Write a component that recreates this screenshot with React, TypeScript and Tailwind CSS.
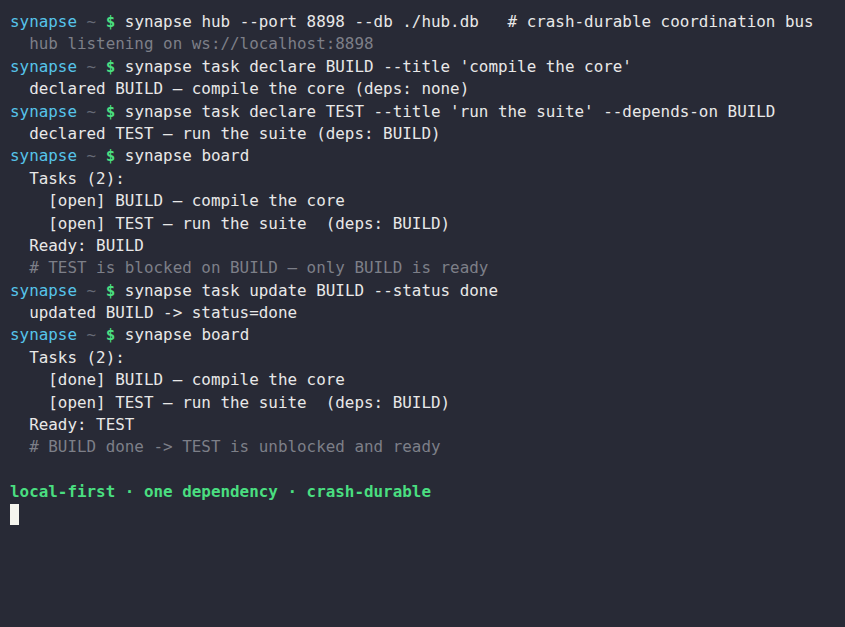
type Line =
  | { kind: 'cmd'; text: string; comment?: string }
  | { kind: 'out'; text: string; dim?: boolean }
  | { kind: 'blank' };

const lines: Line[] = [
  { kind: 'cmd', text: 'synapse hub --port 8898 --db ./hub.db', comment: '   # crash-durable coordination bus' },
  { kind: 'out', text: '  hub listening on ws://localhost:8898', dim: true },
  { kind: 'cmd', text: "synapse task declare BUILD --title 'compile the core'" },
  { kind: 'out', text: '  declared BUILD — compile the core (deps: none)' },
  { kind: 'cmd', text: "synapse task declare TEST --title 'run the suite' --depends-on BUILD" },
  { kind: 'out', text: '  declared TEST — run the suite (deps: BUILD)' },
  { kind: 'cmd', text: 'synapse board' },
  { kind: 'out', text: '  Tasks (2):' },
  { kind: 'out', text: '    [open] BUILD — compile the core' },
  { kind: 'out', text: '    [open] TEST — run the suite  (deps: BUILD)' },
  { kind: 'out', text: '  Ready: BUILD' },
  { kind: 'out', text: '  # TEST is blocked on BUILD — only BUILD is ready', dim: true },
  { kind: 'cmd', text: 'synapse task update BUILD --status done' },
  { kind: 'out', text: '  updated BUILD -> status=done' },
  { kind: 'cmd', text: 'synapse board' },
  { kind: 'out', text: '  Tasks (2):' },
  { kind: 'out', text: '    [done] BUILD — compile the core' },
  { kind: 'out', text: '    [open] TEST — run the suite  (deps: BUILD)' },
  { kind: 'out', text: '  Ready: TEST' },
  { kind: 'out', text: '  # BUILD done -> TEST is unblocked and ready', dim: true },
  { kind: 'blank' },
];

function Prompt() {
  return (
    <>
      <span className="text-[#56c4ea]">synapse</span>
      <span className="text-[#666a76]"> ~ </span>
      <span className="font-bold text-[#4ade80]">$</span>{' '}
    </>
  );
}

export default function App() {
  return (
    <div className="min-h-screen w-full bg-[#282a36] px-[10px] pt-[11px] pb-[10px] font-['DejaVu_Sans_Mono',monospace] text-[15.9px] leading-[22.4px] text-[#e8e8e8]">
      {lines.map((l, i) => (
        <div key={i} className="h-[22.4px] whitespace-pre">
          {l.kind === 'cmd' && (
            <>
              <Prompt />
              {l.text}
              {l.comment}
            </>
          )}
          {l.kind === 'out' && <span className={l.dim ? 'text-[#7d7f88]' : ''}>{l.text}</span>}
        </div>
      ))}

      {/* tagline */}
      <div className="h-[22.4px] whitespace-pre font-bold text-[#4ade80]">
        local-first · one dependency · crash-durable
      </div>
      <div className="flex h-[22.4px] items-center">
        <span className="h-[21px] w-[9px] bg-[#f5f5ee]" />
      </div>
    </div>
  );
}
